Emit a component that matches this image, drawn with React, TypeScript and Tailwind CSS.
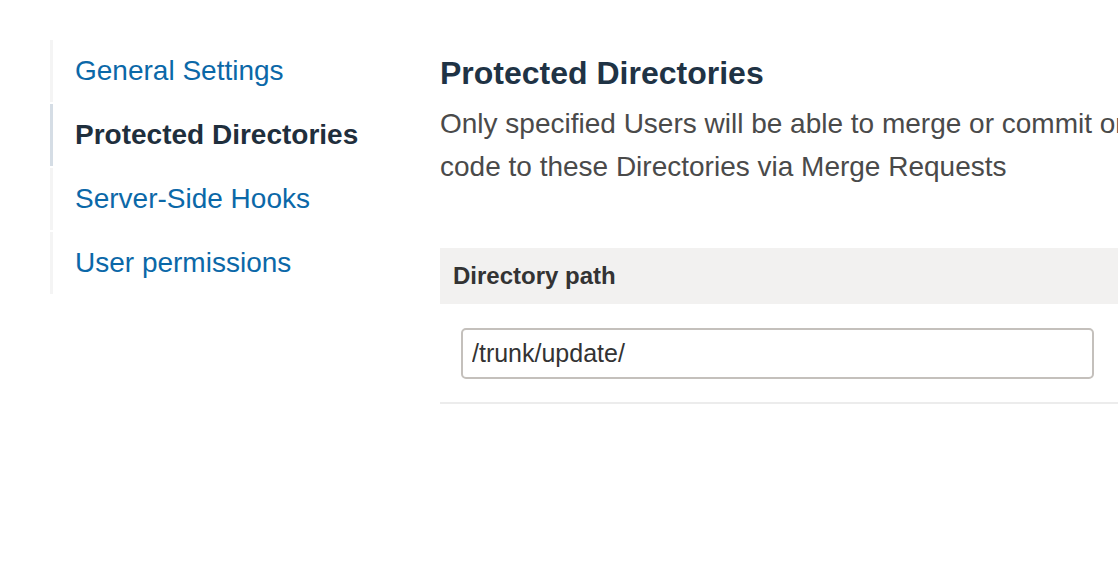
import React from 'react';

const navItems = [
  { label: 'General Settings', active: false },
  { label: 'Protected Directories', active: true },
  { label: 'Server-Side Hooks', active: false },
  { label: 'User permissions', active: false },
];

export default function App() {
  return (
    <div
      className="w-[1118px] h-[578px] overflow-hidden bg-white flex"
      style={{ fontFamily: '"Liberation Sans", Arial, sans-serif' }}
    >
      {/* SIDEBAR */}
      <nav className="w-[440px] shrink-0 pl-[50px] pt-[40px] flex flex-col gap-[2px]">
        {navItems.map((item) => (
          <a
            key={item.label}
            href="#"
            className={
              item.active
                ? 'h-[62px] flex items-center pl-[22px] border-l-[3px] border-[#d5dde5] text-[28px] font-bold text-[#1f2f3d]'
                : 'h-[62px] flex items-center pl-[22px] border-l-[3px] border-[#f4f4f4] text-[28px] text-[#0b68a8]'
            }
          >
            {item.label}
          </a>
        ))}
      </nav>

      {/* CONTENT */}
      <main className="w-[900px] shrink-0 pt-[54px]">
        <h2 className="text-[32px] font-bold text-[#1f3345] leading-[38px]">Protected Directories</h2>
        <p className="mt-[10px] text-[28px] leading-[43px] text-[#4a4a4a]">
          Only specified Users will be able to merge or commit or push
          <br />
          code to these Directories via Merge Requests
        </p>

        <div className="mt-[60px]">
          <div className="h-[56px] bg-[#f2f1f0] flex items-center pl-[13px] text-[24px] font-bold text-[#333]">
            Directory path
          </div>
          <div className="h-[100px] flex items-center pl-[21px] border-b-2 border-[#ececec]">
            <input
              readOnly
              value="/trunk/update/"
              className="w-[633px] h-[51px] px-[9px] border-2 border-[#c4c0bc] rounded-[5px] text-[25px] text-[#333] outline-none"
              style={{ fontFamily: '"Liberation Sans", Arial, sans-serif' }}
            />
          </div>
        </div>
      </main>
    </div>
  );
}
